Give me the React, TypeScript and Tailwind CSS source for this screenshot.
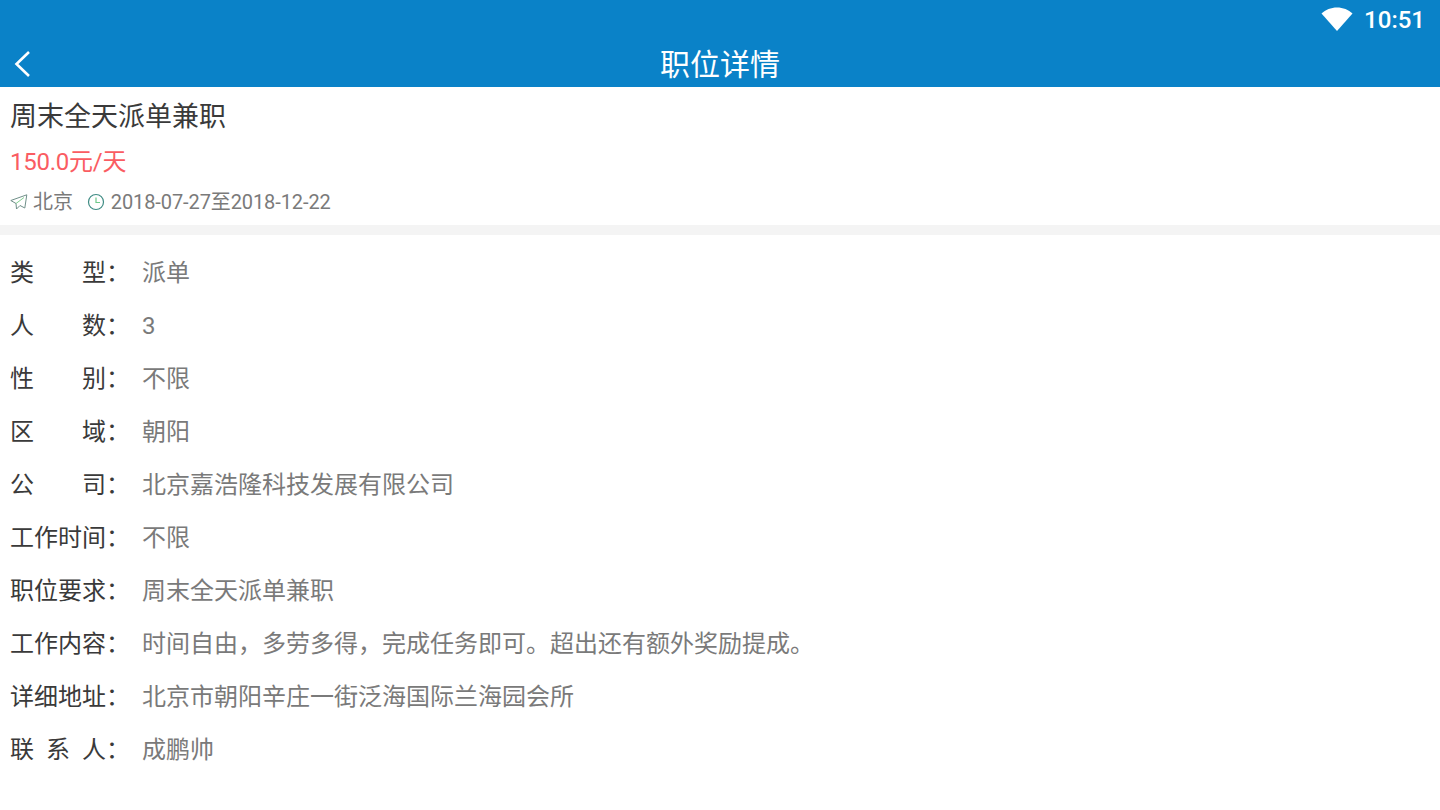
const FONT = "font-['Roboto','Noto_Sans_CJK_SC',sans-serif]"

const DETAILS = [
  { label: ['类', '型'], value: '派单' },
  { label: ['人', '数'], value: '3' },
  { label: ['性', '别'], value: '不限' },
  { label: ['区', '域'], value: '朝阳' },
  { label: ['公', '司'], value: '北京嘉浩隆科技发展有限公司' },
  { label: ['工', '作', '时', '间'], value: '不限' },
  { label: ['职', '位', '要', '求'], value: '周末全天派单兼职' },
  { label: ['工', '作', '内', '容'], value: '时间自由\uFF0C多劳多得\uFF0C完成任务即可。超出还有额外奖励提成。' },
  { label: ['详', '细', '地', '址'], value: '北京市朝阳辛庄一街泛海国际兰海园会所' },
  { label: ['联', '系', '人'], value: '成鹏帅' },
]

export default function App() {
  return (
    <div className={`${FONT} h-[810px] w-[1440px] overflow-hidden bg-white`} lang="zh-CN">
      <header className="h-[87px] bg-[#0a82c8] text-white">
        <div className="flex h-[40px] items-center justify-end pr-[15px]">
          <svg width="32" height="24" viewBox="0 0 32 24" className="mb-[2px] mr-[11px]">
            <path d="M0.5 6.5C4.5 2.8 10 0.5 16 0.5s11.500 2.300 15.500 6L16 24z" fill="#fff" />
          </svg>
          <span className="text-[24px] font-medium leading-none">10:51</span>
        </div>
        <div className="relative flex h-[47px] items-center justify-center pt-[3px]">
          <svg width="18" height="28" viewBox="0 0 18 28" className="absolute left-[14px] top-[10px]" fill="none">
            <path d="M15 2L2.500 14 15 26" stroke="#fff" strokeWidth="2.600" />
          </svg>
          <h1 className="text-[30px] font-normal leading-none">职位详情</h1>
        </div>
      </header>

      <section className="h-[138px] px-[10px]">
        <h2 className="pt-[14px] text-[27px] font-normal leading-[32px] text-[#3a3a3a]">周末全天派单兼职</h2>
        <p className="pt-[15px] text-[24px] leading-[28px] tracking-[-0.25px] text-[#fa5c62]">150.0元/天</p>
        <div className="flex items-center pt-[14px] text-[20px] leading-[24px] tracking-[-0.1px] text-[#7a7a7a]">
          <svg width="18" height="16" viewBox="0 0 18 16" fill="none" className="mr-[5px]">
            <path d="M0.800 6.500L16.800 0.800 14.800 14 10 11.500 6.500 15 6 9.500z" stroke="#6f8f88" strokeWidth="1" strokeLinejoin="round" />
            <path d="M6 9.500L14 3.500" stroke="#7fd08e" strokeWidth="1" />
          </svg>
          <span>北京</span>
          <svg width="18" height="18" viewBox="0 0 18 18" fill="none" className="ml-[14px] mr-[6px]">
            <circle cx="9" cy="9" r="7.500" stroke="#3f8c84" strokeWidth="1.200" />
            <path d="M9 4.500V9.500H13" stroke="#6fc98a" strokeWidth="1.200" />
          </svg>
          <span>2018-07-27至2018-12-22</span>
        </div>
      </section>

      <div className="h-[10px] bg-[#f4f4f4]" />

      <dl className="pt-[11px]">
        {DETAILS.map((row) => (
          <div key={row.value + row.label.join('')} className="flex h-[53px] items-center pl-[10px] text-[24px]">
            <dt className="flex w-[132px] text-[#3a3a3a]">
              <span className="flex w-[96px] justify-between">
                {row.label.map((ch, i) => (
                  <span key={i}>{ch}</span>
                ))}
              </span>
              <span>{'\uFF1A'}</span>
            </dt>
            <dd className="text-[#7a7a7a]">{row.value}</dd>
          </div>
        ))}
      </dl>
    </div>
  )
}
